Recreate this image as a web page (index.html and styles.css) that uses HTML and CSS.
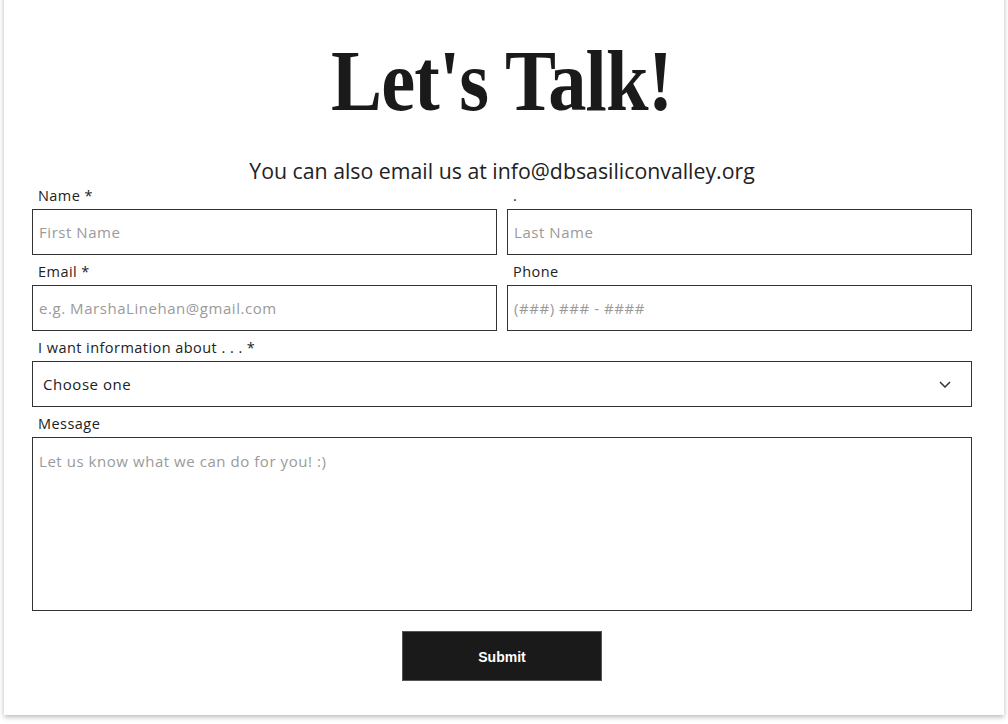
FILE: index.html
```html
<!DOCTYPE html>
<html lang="en">
<head>
<meta charset="utf-8">
<title>Let's Talk!</title>
<link rel="stylesheet" href="styles.css">
</head>
<body>
<div class="page">
  <div class="card">
    <h1 class="title"><span class="title-text">Let's Talk!</span></h1>
    <p class="subtitle">You can also email us at info@dbsasiliconvalley.org</p>
    <form class="form">
      <div class="row two">
        <div class="field">
          <label class="label">Name *</label>
          <input class="box" type="text" placeholder="First Name">
        </div>
        <div class="field">
          <label class="label">.</label>
          <input class="box" type="text" placeholder="Last Name">
        </div>
      </div>
      <div class="row two">
        <div class="field">
          <label class="label">Email *</label>
          <input class="box" type="text" placeholder="e.g. MarshaLinehan@gmail.com">
        </div>
        <div class="field">
          <label class="label">Phone</label>
          <input class="box" type="text" placeholder="(###) ### - ####">
        </div>
      </div>
      <div class="row">
        <div class="field">
          <label class="label">I want information about . . . *</label>
          <div class="box select">
            <span>Choose one</span>
            <svg class="chev" width="12" height="7" viewBox="0 0 12 7"><path d="M1 1 L6 6 L11 1" fill="none" stroke="#333" stroke-width="1.5"/></svg>
          </div>
        </div>
      </div>
      <div class="row">
        <div class="field">
          <label class="label">Message</label>
          <textarea class="box area" placeholder="Let us know what we can do for you! :)"></textarea>
        </div>
      </div>
      <div class="actions">
        <button class="submit" type="button">Submit</button>
      </div>
    </form>
  </div>
</div>
</body>
</html>
```

FILE: styles.css
```css
html, body {
  margin: 0;
  padding: 0;
  background: #ffffff;
}
.page {
  padding: 0 4px 9px 4px;
  overflow: hidden;
}
.card {
  margin-top: -10px;
  background: #fff;
  box-shadow: 0 2px 5px rgba(0,0,0,0.28);
  padding: 10px 32px 34px 28px;
  font-family: "Open Sans", "Liberation Sans", sans-serif;
  color: #2b2b2b;
}
.title {
  margin: 36px 0 0 0;
  text-align: center;
  font-family: "Liberation Serif", "Times New Roman", serif;
  font-weight: 700;
  font-size: 86px;
  line-height: 90px;
  color: #1a1a1a;
}
.title-text {
  display: inline-block;
  letter-spacing: -1px;
  transform: scaleX(0.89);
}
.subtitle {
  margin: 33px 0 0 0;
  text-align: center;
  font-size: 21.3px;
  line-height: 24px;
  color: #222;
}
.form {
  margin-top: 4px;
  display: flex;
  flex-direction: column;
  gap: 8px;
}
.row.two {
  display: grid;
  grid-template-columns: 1fr 1fr;
  gap: 10px;
}
.field {
  display: flex;
  flex-direction: column;
}
.label {
  font-size: 14.5px;
  letter-spacing: 0.45px;
  line-height: 18px;
  padding-left: 6px;
  margin-bottom: 4px;
  color: #222;
}
.box {
  box-sizing: border-box;
  height: 46px;
  border: 1px solid #333;
  border-radius: 0;
  background: #fff;
  font-family: "Open Sans", "Liberation Sans", sans-serif;
  font-size: 15px;
  letter-spacing: 0.55px;
  color: #222;
  padding: 0 6px;
  margin: 0;
  outline: none;
  width: 100%;
}
.box::placeholder {
  color: #9a9a9a;
}
.select {
  display: flex;
  align-items: center;
  justify-content: space-between;
  padding: 0 20px 0 10px;
}
.area {
  height: 174px;
  padding: 13px 6px;
  resize: none;
  display: block;
}
.actions {
  display: flex;
  justify-content: center;
  margin-top: 12px;
}
.submit {
  width: 200px;
  height: 50px;
  background: #1a1a1a;
  color: #fff;
  border: 1px solid #555;
  font-family: "Liberation Sans", Arial, sans-serif;
  font-weight: 700;
  font-size: 14px;
  padding-top: 3px;
  cursor: pointer;
}
```
